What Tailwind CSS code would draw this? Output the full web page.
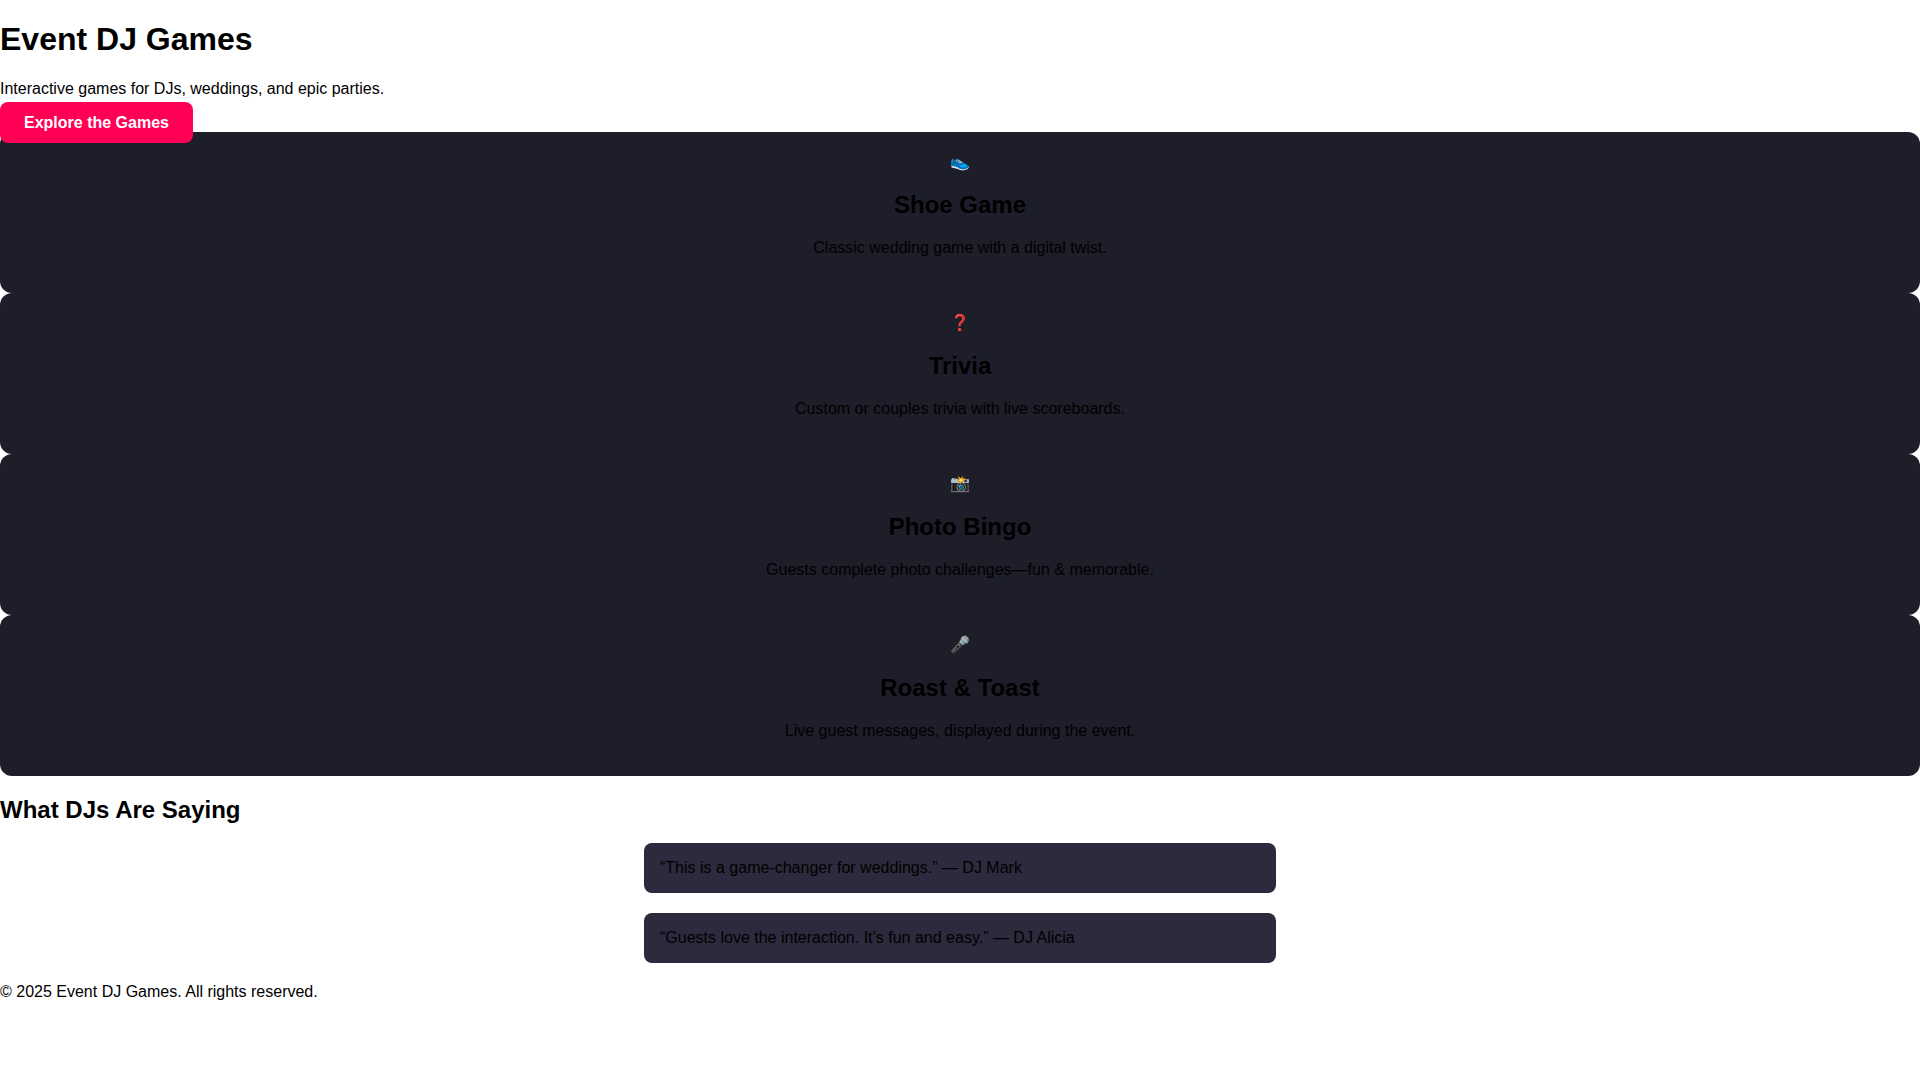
<!DOCTYPE html>
<html lang="en">
<head>
    <meta charset="UTF-8" />
    <meta name="viewport" content="width=device-width, initial-scale=1.0">
    <title>Event DJ Games</title>
    <script src="https://cdn.jsdelivr.net/npm/@tailwindcss/browser@4"></script>
</head>
<body class="bg-white text-black text-base leading-[18px] font-['Liberation_Sans',Arial,sans-serif]">

    <!-- Hero -->
    <header class="pt-[21px]">
        <h1 class="text-[32px] leading-[37px] font-bold mb-[22px]">Event DJ Games</h1>
        <p class="mb-4">Interactive games for DJs, weddings, and epic parties.</p>
        <a href="#games" class="bg-[#ff0055] text-white font-bold px-6 py-3 rounded-lg">Explore the Games</a>
    </header>

    <!-- Games -->
    <section id="games">
        <div class="bg-[#1e1d2a] rounded-xl p-5 text-center">
            <div class="leading-[19px]">👟</div>
            <h2 class="text-2xl leading-[28px] font-bold my-5">Shoe Game</h2>
            <p class="mb-4">Classic wedding game with a digital twist.</p>
        </div>
        <div class="bg-[#1e1d2a] rounded-xl p-5 text-center">
            <div class="leading-[19px]">❓</div>
            <h2 class="text-2xl leading-[28px] font-bold my-5">Trivia</h2>
            <p class="mb-4">Custom or couples trivia with live scoreboards.</p>
        </div>
        <div class="bg-[#1e1d2a] rounded-xl p-5 text-center">
            <div class="leading-[19px]">📸</div>
            <h2 class="text-2xl leading-[28px] font-bold my-5">Photo Bingo</h2>
            <p class="mb-4">Guests complete photo challenges—fun &amp; memorable.</p>
        </div>
        <div class="bg-[#1e1d2a] rounded-xl p-5 text-center">
            <div class="leading-[19px]">🎤</div>
            <h2 class="text-2xl leading-[28px] font-bold my-5">Roast &amp; Toast</h2>
            <p class="mb-4">Live guest messages, displayed during the event.</p>
        </div>
    </section>

    <!-- Testimonials -->
    <section>
        <h2 class="text-2xl leading-[27px] font-bold my-5">What DJs Are Saying</h2>
        <blockquote class="bg-[#2c2a3c] rounded-lg p-4 max-w-[632px] mx-auto mb-5">“This is a game-changer for weddings.” — DJ Mark</blockquote>
        <blockquote class="bg-[#2c2a3c] rounded-lg p-4 max-w-[632px] mx-auto mb-5">“Guests love the interaction. It’s fun and easy.” — DJ Alicia</blockquote>
    </section>

    <footer>
        <p class="mb-4">© 2025 Event DJ Games. All rights reserved.</p>
    </footer>

</body>
</html>
